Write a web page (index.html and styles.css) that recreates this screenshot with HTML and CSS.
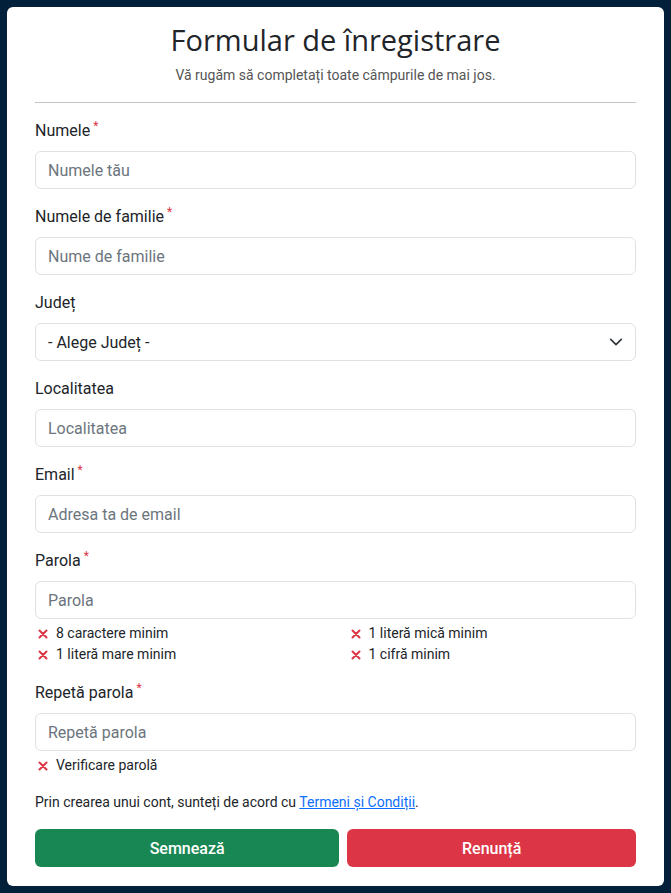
FILE: index.html
```html
<!DOCTYPE html>
<html lang="ro">
<head>
<meta charset="utf-8">
<title>Formular de înregistrare</title>
<link rel="stylesheet" href="styles.css">
</head>
<body>
<main class="card">
  <header class="head">
    <h1 class="title">Formular de înregistrare</h1>
    <p class="subtitle">Vă rugăm să completați toate câmpurile de mai jos.</p>
  </header>
  <hr class="sep">
  <form class="form">
    <div class="group">
      <label class="label">Numele<span class="req">*</span></label>
      <input class="control" type="text" placeholder="Numele tău">
    </div>
    <div class="group">
      <label class="label">Numele de familie<span class="req">*</span></label>
      <input class="control" type="text" placeholder="Nume de familie">
    </div>
    <div class="group">
      <label class="label">Județ</label>
      <div class="select">
        <span>- Alege Județ -</span>
        <svg class="chev" width="16" height="16" viewBox="0 0 16 16"><path d="M2 5l6 6 6-6" fill="none" stroke="#343a40" stroke-width="2" stroke-linecap="round" stroke-linejoin="round"/></svg>
      </div>
    </div>
    <div class="group">
      <label class="label">Localitatea</label>
      <input class="control" type="text" placeholder="Localitatea">
    </div>
    <div class="group">
      <label class="label">Email<span class="req">*</span></label>
      <input class="control" type="text" placeholder="Adresa ta de email">
    </div>
    <div class="group">
      <label class="label">Parola<span class="req">*</span></label>
      <input class="control" type="text" placeholder="Parola">
      <ul class="checks">
        <li class="check"><svg class="x" width="10" height="10" viewBox="0 0 10 10"><path d="M1.5 1.5l7 7M8.5 1.5l-7 7" stroke="#dc3545" stroke-width="2" stroke-linecap="round"/></svg>8 caractere minim</li>
        <li class="check"><svg class="x" width="10" height="10" viewBox="0 0 10 10"><path d="M1.5 1.5l7 7M8.5 1.5l-7 7" stroke="#dc3545" stroke-width="2" stroke-linecap="round"/></svg>1 literă mică minim</li>
        <li class="check"><svg class="x" width="10" height="10" viewBox="0 0 10 10"><path d="M1.5 1.5l7 7M8.5 1.5l-7 7" stroke="#dc3545" stroke-width="2" stroke-linecap="round"/></svg>1 literă mare minim</li>
        <li class="check"><svg class="x" width="10" height="10" viewBox="0 0 10 10"><path d="M1.5 1.5l7 7M8.5 1.5l-7 7" stroke="#dc3545" stroke-width="2" stroke-linecap="round"/></svg>1 cifră minim</li>
      </ul>
    </div>
    <div class="group">
      <label class="label">Repetă parola<span class="req">*</span></label>
      <input class="control" type="text" placeholder="Repetă parola">
      <ul class="checks single">
        <li class="check"><svg class="x" width="10" height="10" viewBox="0 0 10 10"><path d="M1.5 1.5l7 7M8.5 1.5l-7 7" stroke="#dc3545" stroke-width="2" stroke-linecap="round"/></svg>Verificare parolă</li>
      </ul>
    </div>
    <p class="terms">Prin crearea unui cont, sunteți de acord cu <a href="#" class="link">Termeni și Condiții</a>.</p>
    <div class="actions">
      <button type="button" class="btn btn-ok">Semnează</button>
      <button type="button" class="btn btn-cancel">Renunță</button>
    </div>
  </form>
</main>
</body>
</html>
```
FILE: styles.css
```css
* { box-sizing: border-box; }
html, body { margin: 0; padding: 0; }
body {
  background: #03203b;
  font-family: Roboto, "Liberation Sans", sans-serif;
  color: #212529;
  padding: 7px;
  min-height: 893px;
}
.card {
  background: #fff;
  border-radius: 6px;
  padding: 15px 28px 19px;
  width: 657px;
}
.head { text-align: center; }
.title {
  margin: 0;
  font-family: "Open Sans", sans-serif;
  font-weight: 400;
  font-size: 29px;
  line-height: 36px;
  color: #212529;
}
.subtitle {
  margin: 7px 0 0;
  font-size: 14px;
  line-height: 21px;
  color: #555;
}
.sep {
  margin: 16px 0 0;
  border: 0;
  border-top: 1px solid #c4c4c4;
  height: 0;
}
.form { padding-top: 16px; }
.group { margin-bottom: 16px; display: flex; flex-direction: column; }
.label {
  font-size: 16px;
  line-height: 24px;
  margin-bottom: 8px;
  color: #212529;
}
.req {
  color: #dc3545;
  font-size: 12px;
  vertical-align: top;
  line-height: 14px;
  margin-left: 3px;
}
.control, .select {
  height: 38px;
  border: 1px solid #dee2e6;
  border-radius: 6px;
  padding: 6px 12px;
  font-family: Roboto, "Liberation Sans", sans-serif;
  font-size: 16px;
  color: #212529;
  background: #fff;
  width: 100%;
  outline: none;
}
.control::placeholder { color: #6c757d; opacity: 1; }
.select {
  display: flex;
  align-items: center;
  justify-content: space-between;
  padding-right: 12px;
}
.chev { width: 14px; height: 14px; }
.checks {
  list-style: none;
  margin: 4px 0 0;
  padding: 0;
  display: grid;
  grid-template-columns: 1fr 1fr;
  column-gap: 24px;
}
.checks.single { grid-template-columns: 1fr; }
.check {
  display: flex;
  align-items: center;
  font-size: 14px;
  line-height: 21px;
  color: #212529;
  padding-left: 3px;
}
.x { width: 10px; height: 10px; margin-right: 8px; flex: none; }
.terms {
  margin: 0;
  font-size: 14px;
  line-height: 21px;
  color: #212529;
}
.link { color: #0d6efd; text-decoration: underline; }
.actions {
  display: flex;
  gap: 8px;
  margin-top: 16px;
}
.btn {
  flex: 1 1 auto;
  height: 38px;
  border: 0;
  border-radius: 6px;
  color: #fff;
  font-family: Roboto, "Liberation Sans", sans-serif;
  font-size: 16px;
  font-weight: 500;
  cursor: pointer;
}
.btn-ok { background: #198754; }
.btn-cancel { background: #dc3545; }
```
